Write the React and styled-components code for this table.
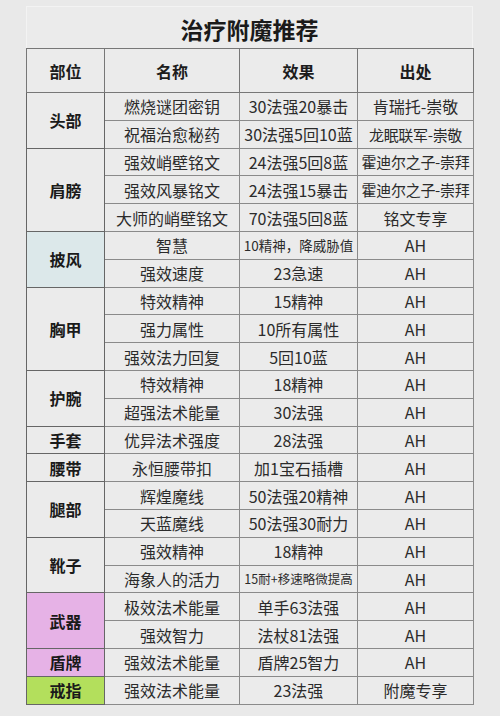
import * as React from "react";
import styled, { createGlobalStyle } from "styled-components";

const GlobalStyle = createGlobalStyle`
  html, body {
    margin: 0;
    padding: 0;
    background: #e9e9e9;
  }
  body {
    font-family: "Noto Sans CJK SC", "Noto Sans", sans-serif;
  }
`;

// [名称, 效果, 出处, 效果字号]
const groups = [
    { part: "头部", rows: [
        ["燃烧谜团密钥", "30法强20暴击", "肯瑞托-崇敬"],
        ["祝福治愈秘药", "30法强5回10蓝", "龙眠联军-崇敬"],
    ]},
    { part: "肩膀", rows: [
        ["强效峭壁铭文", "24法强5回8蓝", "霍迪尔之子-崇拜"],
        ["强效风暴铭文", "24法强15暴击", "霍迪尔之子-崇拜"],
        ["大师的峭壁铭文", "70法强5回8蓝", "铭文专享"],
    ]},
    { part: "披风", bg: "#dce8ea", rows: [
        ["智慧", "10精神，降威胁值", "AH", 13.5],
        ["强效速度", "23急速", "AH"],
    ]},
    { part: "胸甲", rows: [
        ["特效精神", "15精神", "AH"],
        ["强力属性", "10所有属性", "AH"],
        ["强效法力回复", "5回10蓝", "AH"],
    ]},
    { part: "护腕", rows: [
        ["特效精神", "18精神", "AH"],
        ["超强法术能量", "30法强", "AH"],
    ]},
    { part: "手套", rows: [
        ["优异法术强度", "28法强", "AH"],
    ]},
    { part: "腰带", rows: [
        ["永恒腰带扣", "加1宝石插槽", "AH"],
    ]},
    { part: "腿部", rows: [
        ["辉煌魔线", "50法强20精神", "AH"],
        ["天蓝魔线", "50法强30耐力", "AH"],
    ]},
    { part: "靴子", rows: [
        ["强效精神", "18精神", "AH"],
        ["海象人的活力", "15耐+移速略微提高", "AH", 12.5],
    ]},
    { part: "武器", bg: "#e6b2e6", rows: [
        ["极效法术能量", "单手63法强", "AH"],
        ["强效智力", "法杖81法强", "AH"],
    ]},
    { part: "盾牌", bg: "#e6b2e6", rows: [
        ["强效法术能量", "盾牌25智力", "AH"],
    ]},
    { part: "戒指", bg: "#b3df5c", rows: [
        ["强效法术能量", "23法强", "附魔专享"],
    ]},
];

export default function App() {
    return (
        <Page>
            <GlobalStyle />
            <Title>治疗附魔推荐</Title>
            <Table>
                <colgroup>
                    <col style={{ width: 78 }} />
                    <col style={{ width: 135 }} />
                    <col style={{ width: 118 }} />
                    <col style={{ width: 116 }} />
                </colgroup>
                <thead>
                <tr>
                    <Th>部位</Th>
                    <Th>名称</Th>
                    <Th>效果</Th>
                    <Th>出处</Th>
                </tr>
                </thead>
                {groups.map(({ part, bg, rows }) => (
                    <Group key={part}>
                        {rows.map(([name, effect, source, size], i) => (
                            <Row key={name + i}>
                                {i === 0 && <PartCell rowSpan={rows.length} $bg={bg}>{part}</PartCell>}
                                <Td>{name}</Td>
                                <Td $size={size}>{effect}</Td>
                                <Td $size={source.length > 6 ? 15 : undefined} $tight={source.length > 6}>{source}</Td>
                            </Row>
                        ))}
                    </Group>
                ))}
            </Table>
        </Page>
    );
}

const Page = styled.div`
  width: 447px;
  padding: 6px 0 0 26px;
`;

const Title = styled.div`
  height: 42px;
  box-sizing: border-box;
  border: 1px solid #f3f3f3;
  border-bottom: none;
  background: #ebebeb;
  display: flex;
  align-items: center;
  justify-content: center;
  font-size: 23px;
  font-weight: 700;
  color: #1a1a1a;
  padding-top: 2px;
`;

const Table = styled.table`
  width: 447px;
  table-layout: fixed;
  border-collapse: collapse;
  background: #ebebeb;
  border: 1px solid #6f6f6f;
`;

const Group = styled.tbody`
  border-top: 1px solid #555;
`;

const Row = styled.tr`
  height: 27.8px;
`;

const Th = styled.th`
  height: 43px;
  padding: 0;
  border: 1px solid #777;
  font-size: 16px;
  font-weight: 700;
  color: #1c1c1c;
  text-align: center;
`;

const Td = styled.td`
  padding: 0;
  border: 1px solid #8a8a8a;
  text-align: center;
  white-space: nowrap;
  color: #2b2b2b;
  font-size: ${p => p.$size || 16}px;
  letter-spacing: ${p => p.$tight ? "-0.3px" : "0"};
  line-height: 1;
`;

const PartCell = styled.td`
  padding: 0;
  border: 1px solid #666;
  background: ${p => p.$bg || "transparent"};
  text-align: center;
  font-size: 16px;
  font-weight: 700;
  color: #1a1a1a;
`;
